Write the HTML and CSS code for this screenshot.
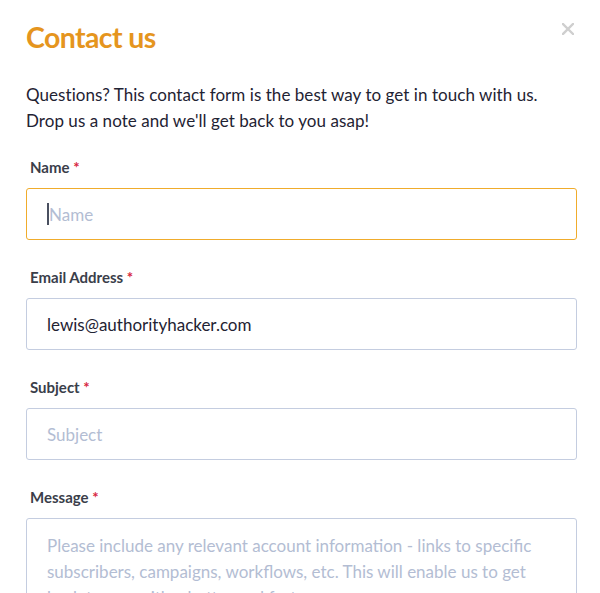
FILE: index.html
```html
<!DOCTYPE html>
<html>
<head>
<meta charset="utf-8">
<link rel="stylesheet" href="styles.css">
</head>
<body>
<div class="modal">
  <div class="header">
    <h1 class="title">Contact us</h1>
    <button class="close" aria-label="Close">
      <svg width="12" height="12" viewBox="0 0 12 12"><path d="M1 1L11 11M11 1L1 11" stroke="#cfcfcf" stroke-width="2.4" stroke-linecap="square"/></svg>
    </button>
  </div>
  <p class="intro">Questions? This contact form is the best way to get in touch with us. Drop us a note and we'll get back to you asap!</p>
  <form class="form">
    <div class="field">
      <label class="label">Name <span class="req">*</span></label>
      <div class="input focused"><span class="caret"></span><span class="ph">Name</span></div>
    </div>
    <div class="field">
      <label class="label">Email Address <span class="req">*</span></label>
      <div class="input"><span class="val">lewis@authorityhacker.com</span></div>
    </div>
    <div class="field">
      <label class="label">Subject <span class="req">*</span></label>
      <div class="input"><span class="ph">Subject</span></div>
    </div>
    <div class="field">
      <label class="label">Message <span class="req">*</span></label>
      <div class="textarea"><span class="ph">Please include any relevant account information - links to specific subscribers, campaigns, workflows, etc. This will enable us to get back to you with a better and faster answer.</span></div>
    </div>
  </form>
</div>
</body>
</html>
```
FILE: styles.css
```css
* { box-sizing: border-box; }
html, body { margin: 0; padding: 0; background: #fff; overflow: hidden; }
body { font-family: "Lato", "Liberation Sans", sans-serif; color: #1f2333; }
.modal { padding: 18px 23px 0 26px; }
.header { display: flex; justify-content: space-between; align-items: flex-start; }
.title { margin: 0; font-size: 28.5px; line-height: 38px; font-weight: 700; color: #e5951e; letter-spacing: -0.6px; }
.close { border: 0; background: none; padding: 0; margin: 4px 2px 0 0; width: 14px; height: 14px; display: flex; align-items: center; justify-content: center; }
.intro { margin: 26px 0 0; font-size: 17px; line-height: 26px; color: #1f2333; max-width: 530px; letter-spacing: 0.05px; }
.form { margin-top: 23px; display: flex; flex-direction: column; }
.field { display: flex; flex-direction: column; margin-bottom: 27px; }
.label { font-size: 15px; font-weight: 700; color: #3a3e4a; line-height: 20px; padding-left: 4px; margin-bottom: 11px; }
.req { color: #d7263d; }
.input { height: 52px; border: 1px solid #c4cde0; border-radius: 3px; display: flex; align-items: center; padding: 0 20px; font-size: 17px; width: 551px; }
.input.focused { border-color: #f0ac2c; }
.caret { width: 2px; height: 22px; background: #4a5060; }
.ph { color: #b3bdd3; }
.val { color: #1f2333; }
.textarea { border: 1px solid #c4cde0; border-radius: 3px; padding: 14px 20px; font-size: 17px; line-height: 26px; width: 551px; height: 120px; }
```
